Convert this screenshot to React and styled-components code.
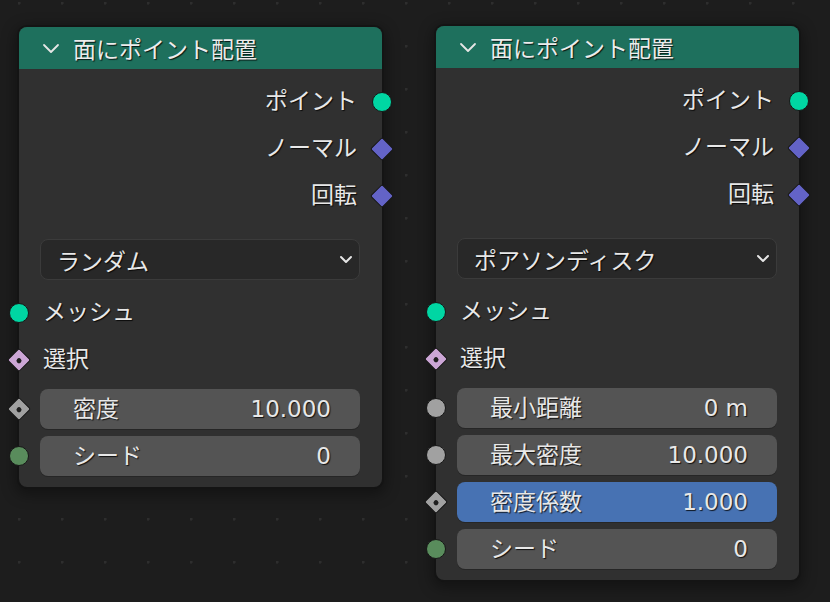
import React from 'react';
import styled, { createGlobalStyle } from 'styled-components';

const GlobalStyle = createGlobalStyle`
  html, body {
    margin: 0;
    padding: 0;
    background: #1d1d1d;
  }
  body {
    font-family: "DejaVu Sans", "Noto Sans CJK JP", sans-serif;
  }
`;

const TEAL = '#00d6a3';
const PURPLE = '#6363c7';
const PINK = '#cca6d6';
const GRAY = '#a1a1a1';
const GREEN = '#598c5c';

const nodes = [
  {
    mode: 'ランダム',
    offset: 1,
    fields: [
      { label: '密度', value: '10.000', socket: { shape: 'diamond', color: GRAY, dot: true } },
      { label: 'シード', value: '0', socket: { shape: 'circle', color: GREEN } }
    ]
  },
  {
    mode: 'ポアソンディスク',
    offset: 0,
    fields: [
      { label: '最小距離', value: '0 m', socket: { shape: 'circle', color: GRAY } },
      { label: '最大密度', value: '10.000', socket: { shape: 'circle', color: GRAY } },
      { label: '密度係数', value: '1.000', active: true, socket: { shape: 'diamond', color: GRAY, dot: true } },
      { label: 'シード', value: '0', socket: { shape: 'circle', color: GREEN } }
    ]
  }
];

const outputs = [
  { label: 'ポイント', shape: 'circle', color: TEAL },
  { label: 'ノーマル', shape: 'diamond', color: PURPLE },
  { label: '回転', shape: 'diamond', color: PURPLE }
];

function Chevron({ size = 18 }) {
  return (
    <svg width={size} height={size / 2 + 2} viewBox="0 0 18 11" fill="none">
      <path d="M2 2 L9 9 L16 2" stroke="#e6e6e6" strokeWidth="1.8" strokeLinecap="round" strokeLinejoin="round" />
    </svg>
  );
}

function SmallChevron() {
  return (
    <svg width="14" height="9" viewBox="0 0 14 9" fill="none">
      <path d="M2 2 L7 7 L12 2" stroke="#e6e6e6" strokeWidth="2" strokeLinecap="round" strokeLinejoin="round" />
    </svg>
  );
}

function Node({ node }) {
  return (
    <NodeBox $offset={node.offset}>
      <Header>
        <Chevron />
        <Title>面にポイント配置</Title>
      </Header>
      <Body>
        {outputs.map(o => (
          <OutputRow key={o.label}>
            <Label>{o.label}</Label>
            <Socket $side="right" $shape={o.shape} $color={o.color} />
          </OutputRow>
        ))}
        <Dropdown>
          <span>{node.mode}</span>
          <SmallChevron />
        </Dropdown>
        <InputRow>
          <Socket $side="left" $shape="circle" $color={TEAL} />
          <Label>メッシュ</Label>
        </InputRow>
        <InputRow>
          <Socket $side="left" $shape="diamond" $color={PINK} $dot />
          <Label>選択</Label>
        </InputRow>
        <Fields>
          {node.fields.map(f => (
            <FieldRow key={f.label}>
              <Socket $side="left" $shape={f.socket.shape} $color={f.socket.color} $dot={f.socket.dot} />
              <Field $active={f.active}>
                <Label>{f.label}</Label>
                <Label>{f.value}</Label>
              </Field>
            </FieldRow>
          ))}
        </Fields>
      </Body>
    </NodeBox>
  );
}

export default function App() {
  return (
    <>
      <GlobalStyle />
      <Canvas>
        {nodes.map((n, i) => (
          <Node key={i} node={n} />
        ))}
      </Canvas>
    </>
  );
}

// dotted node-editor grid
const Canvas = styled.div`
  display: flex;
  align-items: flex-start;
  gap: 54px;
  min-height: 100vh;
  box-sizing: border-box;
  padding: 26px 0 0 19px;
  background-color: #1d1d1d;
  background-image: radial-gradient(circle at 1px 1px, #2e2e2e 1.4px, transparent 1.8px);
  background-size: 43px 43px;
  background-position: 18px 2px;
`;

const NodeBox = styled.div`
  width: 363px;
  margin-top: ${p => p.$offset}px;
  border-radius: 8px;
  background: #303030;
  box-shadow: 0 0 0 2px #141414, 0 4px 14px 4px rgba(0, 0, 0, 0.35);
  color: #e8e8e8;
  font-size: 23px;
  text-shadow: 1px 1px 1px rgba(0, 0, 0, 0.8);
`;

const Header = styled.div`
  height: 42px;
  display: flex;
  align-items: center;
  gap: 13px;
  padding-left: 23px;
  background: #1e705d;
  border-radius: 8px 8px 0 0;
`;

const Title = styled.span`
  font-size: 23px;
  color: #ececec;
`;

const Body = styled.div`
  padding: 9px 0 11px;
`;

const OutputRow = styled.div`
  position: relative;
  height: 47px;
  display: flex;
  align-items: center;
  justify-content: flex-end;
  padding-right: 25px;
`;

const InputRow = styled.div`
  position: relative;
  height: 47px;
  display: flex;
  align-items: center;
  padding-left: 24px;
`;

const Label = styled.span`
  white-space: nowrap;
  line-height: 1;
`;

const Dropdown = styled.div`
  margin: 20px 22px 9px 21px;
  height: 41px;
  box-sizing: border-box;
  display: flex;
  align-items: center;
  justify-content: space-between;
  padding: 0 6px 0 16px;
  background: #282828;
  border: 1px solid #3b3b3b;
  border-radius: 8px;
`;

const Fields = styled.div`
  display: flex;
  flex-direction: column;
  gap: 7px;
  margin-top: 6px;
`;

const FieldRow = styled.div`
  position: relative;
  padding: 0 22px 0 21px;
`;

const Field = styled.div`
  height: 40px;
  display: flex;
  align-items: center;
  justify-content: space-between;
  padding: 0 29px 0 33px;
  border-radius: 8px;
  background: ${p => (p.$active ? '#4772b3' : '#545454')};
  box-shadow: 0 1px 0 #262626;
`;

// sockets sit on the node edge, half outside
const Socket = styled.span`
  position: absolute;
  top: 50%;
  ${p => (p.$side === 'left' ? 'left: 0;' : 'right: 0;')}
  width: ${p => (p.$shape === 'circle' ? '18px' : '15px')};
  height: ${p => (p.$shape === 'circle' ? '18px' : '15px')};
  background: ${p => p.$color};
  border: 1.5px solid #171717;
  border-radius: ${p => (p.$shape === 'circle' ? '50%' : '2px')};
  transform: translate(${p => (p.$side === 'left' ? '-50%' : '50%')}, -50%)
    rotate(${p => (p.$shape === 'diamond' ? '45deg' : '0deg')});

  &::after {
    content: '';
    display: ${p => (p.$dot ? 'block' : 'none')};
    position: absolute;
    left: 50%;
    top: 50%;
    width: 5px;
    height: 5px;
    border-radius: 50%;
    background: #1f1f1f;
    transform: translate(-50%, -50%);
  }
`;
